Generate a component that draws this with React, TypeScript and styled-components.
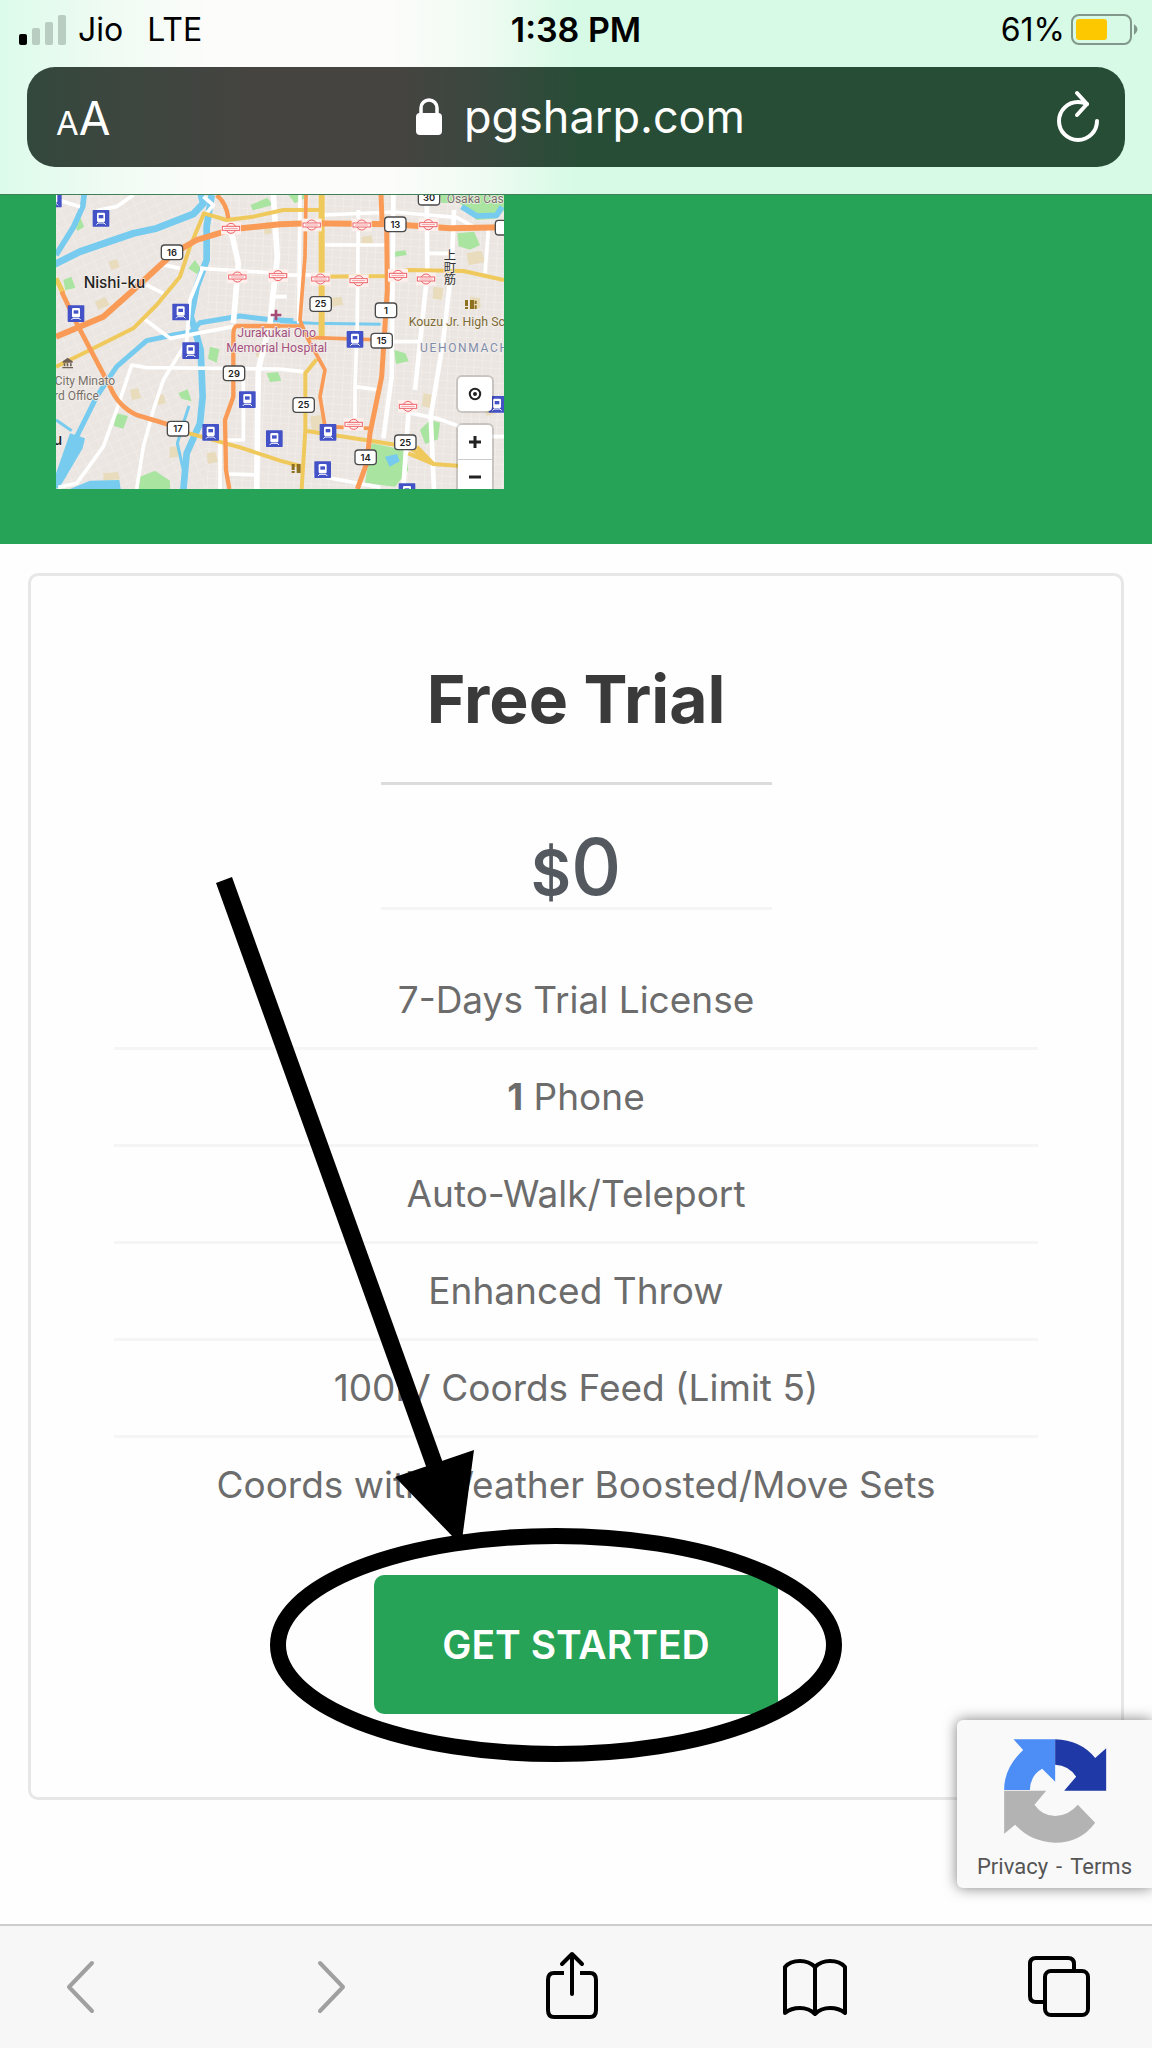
import React from "react";
import styled, { createGlobalStyle } from "styled-components";

const GlobalStyle = createGlobalStyle`
  *, *::before, *::after { box-sizing: border-box; }
  body { margin: 0; background: #fefefe; font-family: Inter, "Liberation Sans", sans-serif; }
  button { font-family: inherit; border: 0; padding: 0; background: none; cursor: pointer; }
  svg { display: block; }
`;

const Screen = styled.div`
  display: flex;
  flex-direction: column;
  min-height: 100vh;
  overflow: hidden;
`;

const Chrome = styled.header`
  display: flex;
  flex-direction: column;
  padding: 0 27px 27px;
  border-bottom: 1px solid #3f7f5a;
  background: linear-gradient(90deg, #dcfbea 0, #effbf3 9%, #fcfcfa 18%, #fcfcfa 34%, #effbf2 42%, #d6fae5 50%, #d6fae5 100%);
`;

const StatusBar = styled.div`
  display: grid;
  grid-template-columns: 1fr auto 1fr;
  align-items: center;
  height: 67px;
  margin: 0 -8px;
  padding-bottom: 8px;
  font-size: 32px;
  line-height: 40px;
  color: #000;
`;

const Carrier = styled.div`
  display: flex;
  align-items: center;
  gap: 12px;
`;

const Network = styled.span`
  margin-left: 12px;
`;

const Clock = styled.time`
  font-size: 34px;
  font-weight: 600;
`;

const Battery = styled.div`
  display: flex;
  align-items: center;
  justify-content: flex-end;
  gap: 6px;
  margin-right: -6px;
`;

const AddressBar = styled.div`
  display: grid;
  grid-template-columns: 1fr auto 1fr;
  align-items: center;
  height: 100px;
  padding: 0 26px 0 29px;
  border-radius: 28px;
  color: #fff;
  background: linear-gradient(90deg, #33483c 0, #3c463f 8%, #454441 20%, #454441 34%, #3b473f 41%, #284d37 50%, #284d37 100%);
`;

const BarButton = styled.button<{ $end?: boolean }>`
  justify-self: ${(p) => (p.$end ? "end" : "start")};
  display: flex;
  align-items: baseline;
  padding-top: ${(p) => (p.$end ? 0 : 6)}px;
  color: #fff;
`;

const Letter = styled.span<{ $size: number }>`
  font-size: ${(p) => p.$size}px;
  line-height: 56px;
`;

const Site = styled.div`
  display: flex;
  align-items: center;
  gap: 22px;
  padding-left: 6px;
  font-size: 45px;
  line-height: 56px;
`;

const Hero = styled.section`
  padding: 0 56px 55px;
  background: #26a356;
`;

const MapFrame = styled.div`
  position: relative;
  width: 448px;
  height: 294px;
  overflow: hidden;
`;

const MapControls = styled.div`
  position: absolute;
  top: 182px;
  right: 12px;
  display: flex;
  flex-direction: column;
  gap: 14px;
`;

const ControlGroup = styled.div`
  display: flex;
  flex-direction: column;
  border-radius: 4px;
  background: #fff;
  box-shadow: 0 0 0 2px rgba(0, 0, 0, 0.15);
`;

const MapButton = styled.button`
  display: grid;
  place-items: center;
  width: 34px;
  height: 34px;
  & + & { border-top: 1px solid #ccc; }
`;

const Main = styled.main`
  position: relative;
  flex: 1;
  padding: 29px 28px 124px;
`;

const Card = styled.article`
  position: relative;
  display: flex;
  flex-direction: column;
  align-items: center;
  padding: 81px 83px 83px;
  border: 3px solid #e7e7e7;
  border-radius: 10px;
`;

const Title = styled.h2`
  margin: 0;
  font-size: 66px;
  line-height: 84px;
  font-weight: 700;
  color: #3a3a3a;
`;

const Rule = styled.hr`
  width: 391px;
  height: 3px;
  margin: 41px 0 0;
  border: 0;
  background: #dcdcdc;
`;

const Price = styled.p`
  width: 391px;
  margin: 42px 0 0;
  border-bottom: 3px solid #f5f5f5;
  text-align: center;
  font-size: 78px;
  line-height: 80px;
  font-weight: 500;
  color: #54595f;
`;

const Currency = styled.span`
  font-size: 62px;
  line-height: 62px;
  font-weight: 600;
`;

const Features = styled.ul`
  align-self: stretch;
  margin: 43px 0 0;
  padding: 0;
  list-style: none;
`;

const Feature = styled.li`
  font-size: 37px;
  line-height: 94px;
  text-align: center;
  white-space: nowrap;
  color: #6c6c6c;
  & + & { border-top: 3px solid #f5f5f5; }
`;

const StartButton = styled.button`
  width: 404px;
  height: 139px;
  margin-top: 43px;
  border-radius: 10px;
  background: #26a356;
  color: #fff;
  font-size: 39px;
  line-height: 46px;
  font-weight: 600;
`;

const Annotation = styled.svg`
  position: absolute;
  top: 296px;
  left: 50%;
  width: 640px;
  height: 900px;
  margin-left: -376px;
  pointer-events: none;
`;

const Captcha = styled.aside`
  position: absolute;
  right: 0;
  bottom: 36px;
  display: flex;
  flex-direction: column;
  align-items: center;
  gap: 11px;
  width: 195px;
  height: 168px;
  padding: 19px 0 0;
  border-radius: 6px 0 0 6px;
  background: #f9f9f9;
  box-shadow: 0 0 14px rgba(0, 0, 0, 0.5);
`;

const Legal = styled.div`
  display: flex;
  gap: 8px;
  font-family: Roboto, "Liberation Sans", sans-serif;
  font-size: 22px;
  line-height: 26px;
  color: #555;
`;

const LegalLink = styled.a`
  color: inherit;
  text-decoration: none;
`;

const Toolbar = styled.nav`
  display: flex;
  justify-content: space-between;
  height: 124px;
  padding: 23px 61px 0 52px;
  border-top: 2px solid #cdcdcd;
  background: #f7f7f7;
`;

const ToolButton = styled.button<{ $muted?: boolean }>`
  width: 64px;
  height: 76px;
  color: ${(p) => (p.$muted ? "#a0a0a0" : "#000")};
`;

const Strokes = styled.svg`
  fill: none;
  stroke: currentColor;
  stroke-width: 4px;
  stroke-linecap: round;
  stroke-linejoin: round;
`;

const VerticalLabel = styled.text`
  writing-mode: vertical-rl;
  font-family: "Noto Sans CJK JP", sans-serif;
  font-size: 37px;
`;

type Pt = [number, number];

const trains: Pt[] = [
  [40, 27], [183, 85], [108, 371], [422, 366], [452, 482], [622, 629], [512, 727],
  [703, 746], [945, 448], [864, 727], [848, 839], [1371, 643], [1101, 905],
];
const metros: Pt[] = [
  [573, 115], [592, 261], [714, 257], [815, 105], [965, 105], [1165, 104],
  [841, 267], [956, 272], [1074, 256], [1158, 267], [1104, 649], [941, 703],
];
const shields: [number, number, string][] = [
  [396, 187, "16"], [582, 550, "29"], [414, 716, "17"], [1167, 23, "30"], [1066, 103, "13"],
  [842, 342, "25"], [1038, 361, "1"], [1025, 452, "15"], [791, 645, "25"], [1096, 757, "25"],
  [977, 802, "14"], [1398, 113, "1"],
];
const parks: string[] = [
  "M632 45l50-22 16 22-60 16z", "M70 270l24-10 12 34-30 6z", "M445 235l20-25 18 26-12 16z",
  "M300 860l45-18 45 30v28h-95z", "M228 670l36 8-14 38-28-8z", "M415 610l28-12 12 36-30-8z",
  "M1250 30l60 60 60-5 22-24V15h-130z", "M1252 130l50-5 18 40-30 14-34-10z",
  "M995 760l100 20 10 60-40 50-90-12z", "M1062 480l34 10 10 24-38 8z", "M1140 720l30-30 30 8-6 50-38 14z",
  "M765 40l38-20v-8h-60z", "M510 470l28 8-8 40-26-12z", "M680 550l34-4 10 26-34 4z",
  "M102 95l20-10 10 26-20 12z", "M1060 185l36-4 4 14-38 6z", "M1200 15h40l-6 24h-30z",
];
const blocks: string[] = [
  "M205 215l26-8 8 24-24 10z", "M165 335l30-14 14 24-34 14z", "M270 600l24-6 10 30-28 6z",
  "M190 850l44-4 6 22-50 4z", "M390 770l24 0 2 30-28 4z", "M670 100l20-4 6 34-22 4z",
  "M650 470l24 0v30h-26z", "M810 680l36-6 10 44-40 6z", "M870 325l34-5 6 24-36 6z",
  "M1280 190l44-8 12 34-50 10z", "M1330 640l30-10 10 40-30 8z", "M1180 290l30 4-4 36-28-4z",
  "M965 140l30-4 4 28-34 2z", "M1150 610l26 4-6 40-24-6z", "M500 790l26-4 8 30-30 6z",
  "M1290 320l30 4 2 30-34 4z", "M1040 850l20 8-4 20-24-4z", "M350 620l20-8 8 26-24 8z",
];

function MapPicture() {
  return (
    <svg width="448" height="294" viewBox="48 15 1344 882" role="img" aria-label="Map of Nishi-ku">
      <defs>
        <pattern id="streets" width="26" height="22" patternUnits="userSpaceOnUse" patternTransform="rotate(3)">
          <path d="M0 0H26M0 0V22" stroke="#f6f2ef" strokeWidth="3" fill="none" />
        </pattern>
        <pattern id="slant" width="30" height="26" patternUnits="userSpaceOnUse" patternTransform="rotate(-24)">
          <path d="M0 0H30M0 0V26" stroke="#f4f0ed" strokeWidth="3" fill="none" />
        </pattern>
      </defs>
      <rect x="48" y="15" width="1344" height="882" fill="#ebe6e1" />
      <path d="M500 15H1392V897H500z" fill="url(#streets)" />
      <path d="M48 15H500V897H48z" fill="url(#slant)" />
      <g fill="#e8dcbd">{blocks.map((d) => <path key={d} d={d} />)}</g>
      <g fill="#a9e4a0">{parks.map((d) => <path key={d} d={d} />)}</g>

      <g fill="none" stroke="#76cbee" strokeLinejoin="round">
        <path d="M40 225L120 185 280 130 350 115 460 72 490 40 482 10" strokeWidth="21" />
        <path d="M48 195L100 112 128 50 133 10" strokeWidth="17" />
        <path d="M515 15L500 110V210L470 290 452 380 462 410 482 480 488 620 480 700 440 790 430 900" strokeWidth="20" />
        <path d="M70 860L100 760 170 620 230 530 320 452 400 435 455 425 480 398 600 378 680 388 760 392" strokeWidth="15" />
        <path d="M720 395L820 400 1022 403" strokeWidth="9" />
        <path d="M48 690L95 722M447 648L430 700 412 760 430 840" strokeWidth="9" />
        <path d="M1265 50L1310 78 1370 76 1386 50" strokeWidth="17" />
      </g>
      <path d="M48 850L90 730 135 745 128 775 60 890 48 897zM90 897L150 872 238 870 242 897zM1035 800l36-8 8 22-30 16z" fill="#76cbee" />

      <g fill="none" stroke="#fff" strokeWidth="11" strokeLinejoin="round">
        <path d="M48 28L120 50M170 62L230 50 280 15M490 20L520 45 500 70" />
        <path d="M575 130L595 220 580 400M700 15L712 200 690 400 655 540 650 897" strokeWidth="17" />
        <path d="M480 235L720 250M360 222L420 235M320 285L370 310M310 385L390 445 580 410" />
        <path d="M55 892L110 880 190 770 230 660 275 525 320 533 720 537 790 545" />
        <path d="M290 897L310 770 340 660 370 570 440 455 450 330 490 230" />
        <path d="M540 760V897M610 570V750L560 750M560 852L655 855" />
        <path d="M700 15L712 205 695 320 740 320M780 15L776 400" />
        <path d="M1060 15L1055 560 1030 745" strokeWidth="14" />
        <path d="M955 60L952 400 945 590 945 700M945 590L1020 600" />
        <path d="M1160 15L1162 250 1125 600M1105 670L1090 897M1242 60L1235 230 1210 450 1172 680 1182 897" strokeWidth="14" />
        <path d="M1345 120L1335 250M850 75L1060 66 1250 82 1300 110M855 165L1040 165M700 255H840M1050 455H1140M820 855L1020 892M1105 668L1190 685 1262 710M1340 740H1392M1160 190H1240" />
      </g>

      <g fill="none" stroke="#f0c95c" strokeWidth="12" strokeLinejoin="round">
        <path d="M48 530L150 480 280 415 350 345 420 260 450 170 492 70 560 90 640 80 730 60 845 60" />
        <path d="M440 728L600 772 720 812 780 828" />
        <path d="M845 15V450" strokeWidth="18" />
        <path d="M830 508L796 550V720L785 897M796 722L990 752 1105 770 1180 822 1262 828M1105 790L1180 822 1130 770" />
        <path d="M845 260L1040 258 1105 240 1270 243 1392 270" />
      </g>

      <g fill="none" stroke="#f99b57" strokeLinejoin="round">
        <path d="M48 440L190 380 280 300 400 190 470 150 575 118 720 103 810 100 1060 103 1230 115 1392 112" strokeWidth="18" />
        <path d="M48 265L70 310" stroke="#f0c95c" strokeWidth="15" />
        <path d="M65 305L110 400 210 590Q235 650 290 675L440 720" strokeWidth="14" />
        <path d="M530 15Q560 40 565 85M720 408H590Q580 410 580 440V620L555 690 558 840 568 897" strokeWidth="13" />
        <path d="M798 15L795 200 780 390 800 440 855 540 840 620 855 710 990 715M720 408H785M800 442L1030 450" strokeWidth="11" />
        <path d="M1023 15L1026 90 1040 110 1042 300 1025 560 990 730 980 820 952 897" strokeWidth="15" />
      </g>

      {metros.map(([x, y]) => (
        <g key={`${x}-${y}`} transform={`translate(${x} ${y})`} fill="none" stroke="#ef6268">
          <rect x="-30" y="-19" width="60" height="38" fill="#fcefec" stroke="none" />
          <circle r="15" strokeWidth="3" />
          <rect x="-26" y="-6" width="52" height="12" fill="#fff" strokeWidth="3" />
          <path d="M-20 0H20" strokeWidth="2" />
        </g>
      ))}
      {trains.map(([x, y]) => (
        <g key={`${x}-${y}`} transform={`translate(${x} ${y})`}>
          <rect x="-25" y="-25" width="50" height="50" rx="2" fill="#4352c6" />
          <rect x="-12" y="-17" width="24" height="28" rx="4" fill="#fff" />
          <path d="M-7-10H7V0H-7z" fill="#4352c6" />
          <path d="M-8 13l-6 6M8 13l6 6M-9 14H9" stroke="#fff" strokeWidth="3" />
        </g>
      ))}
      {shields.map(([x, y, n]) => (
        <g key={`${x}-${y}`}>
          <rect x={x - 32} y={y - 22} width="64" height="44" rx="10" fill="#fff" stroke="#4a4a4a" strokeWidth="4" />
          <text x={x} y={y + 10} fontSize="28" fontWeight="600" textAnchor="middle" fill="#222">{n}</text>
        </g>
      ))}

      <g fill="#6f6257">
        <path d="M68 514l15-11 15 11v4H68zM71 520h5v9h-5zM80 520h5v9h-5zM90 520h5v9h-5zM67 531h32v4H67z" />
      </g>
      <g fill="#8d7120">
        <path d="M1275 330h9v18h-9zM1275 351h9v6h-9zM1290 330h12v27h-12zM755 822h9v18h-9zM755 843h9v6h-9zM770 822h12v27h-12z" />
        <path d="M1275 330h9v18h-9zM1304 332h6v10h-6zM1304 346h6v11h-6z" />
      </g>
      <path d="M708 359v32M692 375h32" stroke="#a64a78" strokeWidth="8" />

      <g fontFamily='Roboto, "Noto Sans", sans-serif' stroke="#f4f0ec" strokeWidth="4" paintOrder="stroke">
        <g fontFamily='Inter, "Liberation Sans", sans-serif' fontSize="46" fontWeight="500" fill="#222">
          <text x="131" y="293">Nishi-ku</text>
          <text x="39" y="765">u</text>
        </g>
        <g fontSize="36" fill="#776f68">
          <text x="44" y="585">City Minato</text>
          <text x="42" y="631">rd Office</text>
          <text x="1220" y="38">Osaka Cas</text>
        </g>
        <g fontSize="37" fill="#a3507f" textAnchor="middle">
          <text x="710" y="440">Jurakukai Ono</text>
          <text x="710" y="487">Memorial Hospital</text>
        </g>
        <text x="1106" y="409" fontSize="37" fill="#7d6a35">Kouzu Jr. High Sc</text>
        <text x="1140" y="486" fontSize="36" fill="#7f8bab" letterSpacing="5">UEHONMACHI</text>
        <VerticalLabel x="1230" y="176" fill="#333">上町筋</VerticalLabel>
      </g>
    </svg>
  );
}

function SignalIcon() {
  return (
    <svg width="47" height="30" viewBox="0 0 47 30" aria-hidden="true">
      <rect y="19" width="8" height="11" rx="2" />
      <g fill="#b9cdc0">
        <rect x="13" y="13" width="8" height="17" rx="2" />
        <rect x="26" y="7" width="8" height="23" rx="2" />
        <rect x="39" width="8" height="30" rx="2" />
      </g>
    </svg>
  );
}

function BatteryIcon() {
  return (
    <svg width="68" height="32" viewBox="0 0 68 32" aria-hidden="true">
      <rect x="1" y="1" width="59" height="29" rx="7" fill="none" stroke="#82978b" strokeWidth="2" />
      <rect x="5" y="5" width="31" height="21" rx="3" fill="#fdc800" />
      <path d="M63 10q7 5.500 0 11z" fill="#82978b" />
    </svg>
  );
}

function LockIcon() {
  return (
    <svg width="26" height="38" viewBox="0 0 26 38" aria-hidden="true">
      <rect y="15" width="26" height="22" rx="4" fill="#fff" />
      <path d="M5 17V10a8 8 0 0 1 16 0v7" fill="none" stroke="#fff" strokeWidth="3.500" />
    </svg>
  );
}

const features: React.ReactNode[] = [
  "7-Days Trial License",
  <><b>1</b> Phone</>,
  "Auto-Walk/Teleport",
  "Enhanced Throw",
  "100IV Coords Feed (Limit 5)",
  "Coords with Weather Boosted/Move Sets",
];

export default function App() {
  return (
    <Screen>
      <GlobalStyle />
      <Chrome>
        <StatusBar>
          <Carrier>
            <SignalIcon />
            <span>Jio</span>
            <Network>LTE</Network>
          </Carrier>
          <Clock>1:38 PM</Clock>
          <Battery>
            <span>61%</span>
            <BatteryIcon />
          </Battery>
        </StatusBar>
        <AddressBar>
          <BarButton aria-label="Text size">
            <Letter $size={33}>A</Letter>
            <Letter $size={46}>A</Letter>
          </BarButton>
          <Site>
            <LockIcon />
            <span>pgsharp.com</span>
          </Site>
          <BarButton $end aria-label="Reload">
            <Strokes width="42" height="56" viewBox="0 0 42 56">
              <path d="M40 32A19 19 0 1 1 21 13Q26 13 30 15" />
              <path d="M20 4L30 15 20 26" />
            </Strokes>
          </BarButton>
        </AddressBar>
      </Chrome>

      <Hero>
        <MapFrame>
          <MapPicture />
          <MapControls>
            <ControlGroup>
              <MapButton aria-label="Locate me">
                <svg width="16" height="16" viewBox="0 0 16 16">
                  <circle cx="8" cy="8" r="5.200" fill="none" stroke="#222" strokeWidth="2" />
                  <circle cx="8" cy="8" r="2" fill="#222" />
                </svg>
              </MapButton>
            </ControlGroup>
            <ControlGroup>
              <MapButton aria-label="Zoom in">
                <svg width="16" height="16" viewBox="0 0 16 16">
                  <path d="M8 2V14M2 8H14" stroke="#222" strokeWidth="3" />
                </svg>
              </MapButton>
              <MapButton aria-label="Zoom out">
                <svg width="16" height="16" viewBox="0 0 16 16">
                  <path d="M2 8H14" stroke="#222" strokeWidth="3" />
                </svg>
              </MapButton>
            </ControlGroup>
          </MapControls>
        </MapFrame>
      </Hero>

      <Main>
        <Card>
          <Title>Free Trial</Title>
          <Rule />
          <Price>
            <Currency>$</Currency>0
          </Price>
          <Features>
            {features.map((f, i) => (
              <Feature key={i}>{f}</Feature>
            ))}
          </Features>
          <StartButton>GET STARTED</StartButton>
          <Annotation viewBox="200 872 640 900" overflow="visible" aria-hidden="true">
            <path d="M224 880L435 1466" stroke="#000" strokeWidth="17" />
            <path d="M395 1477L474 1450 462 1540 456 1540z" />
            <ellipse cx="556" cy="1645" rx="278" ry="109" fill="none" stroke="#000" strokeWidth="16" />
          </Annotation>
        </Card>

        <Captcha>
          <svg width="104" height="104" viewBox="309 177 309 312" aria-label="reCAPTCHA">
            <path d="M339 178H464V305L425 266Q390 285 388 330H311Q310 265 368 210z" fill="#4c8df6" />
            <path d="M464 178Q540 180 584 234L617 205V332H491L527 290Q505 256 464 254z" fill="#1f3aa6" />
            <path d="M311 332H437L402 374Q425 407 464 408 505 406 532 374L584 428Q540 488 464 488 390 486 344 434L311 461z" fill="#b3b3b3" />
          </svg>
          <Legal>
            <LegalLink href="#privacy">Privacy</LegalLink>
            <span>-</span>
            <LegalLink href="#terms">Terms</LegalLink>
          </Legal>
        </Captcha>
      </Main>

      <Toolbar aria-label="Browser">
        <ToolButton $muted aria-label="Back">
          <Strokes width="64" height="76" viewBox="0 0 64 76">
            <path d="M40 14L17 38 40 62" />
          </Strokes>
        </ToolButton>
        <ToolButton $muted aria-label="Forward">
          <Strokes width="64" height="76" viewBox="0 0 64 76">
            <path d="M24 14L47 38 24 62" />
          </Strokes>
        </ToolButton>
        <ToolButton aria-label="Share">
          <Strokes width="64" height="76" viewBox="0 0 64 76">
            <path d="M24 24H14Q8 24 8 31V61Q8 68 14 68H50Q56 68 56 61V31Q56 24 50 24H40" strokeLinecap="butt" />
            <path d="M32 45V5M22 15L32 5 42 15" />
          </Strokes>
        </ToolButton>
        <ToolButton aria-label="Bookmarks">
          <Strokes width="64" height="76" viewBox="0 0 64 76">
            <path d="M32 18Q26 12 17 12 7 12 2 18V64Q8 59 17 59 26 59 32 65 38 59 47 59 56 59 62 64V18Q57 12 47 12 38 12 32 18V65" />
          </Strokes>
        </ToolButton>
        <ToolButton aria-label="Tabs">
          <Strokes width="64" height="76" viewBox="0 0 64 76">
            <path d="M18 53H9Q3 53 3 47V15Q3 9 9 9H41Q47 9 47 15V22" />
            <rect x="18" y="22" width="43" height="44" rx="6" />
          </Strokes>
        </ToolButton>
      </Toolbar>
    </Screen>
  );
}
